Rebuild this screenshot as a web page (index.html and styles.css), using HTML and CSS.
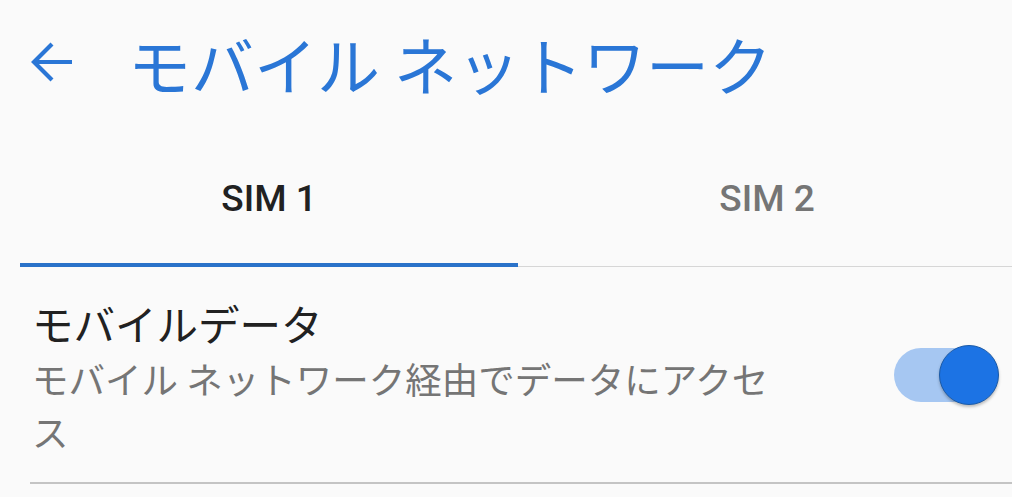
FILE: index.html
```html
<!DOCTYPE html>
<html lang="ja">
  <head>
    <meta charset="UTF-8" />
    <title>モバイル ネットワーク</title>
    <link rel="stylesheet" href="styles.css">
  </head>

  <body>
    <!-- ツールバー -->
    <div class="toolbar">
      <svg class="back" width="44" height="44" viewBox="0 0 44 44">
        <path d="M43 21H5M23 3L5 21L23 39" fill="none" stroke="#2a76d6" stroke-width="4.2" stroke-linecap="butt" stroke-linejoin="miter" />
      </svg>
      <h1 class="title">モバイル ネットワーク</h1>
    </div>

    <!-- SIM タブ -->
    <div class="tabs">
      <div class="tab active">SIM 1</div>
      <div class="tab">SIM 2</div>
    </div>

    <!-- 設定項目 -->
    <div class="item">
      <div class="item-text">
        <div class="item-title">モバイルデータ</div>
        <div class="item-summary">モバイル ネットワーク経由でデータにアクセス</div>
      </div>
      <div class="switch">
        <div class="track"></div>
        <div class="thumb"></div>
      </div>
    </div>
  </body>
</html>
```

FILE: styles.css
```css
body {
  margin: 0;
  background-color: #fafafa;
  font-family: "Noto Sans CJK JP", "Noto Sans", sans-serif;
  overflow: hidden;
}

.toolbar {
  height: 124px;
  display: flex;
  align-items: center;
}

.back {
  margin-left: 29px;
  margin-top: 1px;
}

.title {
  margin: 0 0 0 55px;
  font-size: 63px;
  font-weight: normal;
  line-height: 1;
  color: #2a76d6;
}

.tabs {
  display: flex;
  margin-left: 20px;
  height: 143px;
  border-bottom: 1px solid #d6d6d6;
  box-sizing: border-box;
}

.tab {
  width: 498px;
  flex-shrink: 0;
  box-sizing: border-box;
  padding-top: 53px;
  text-align: center;
  font-family: Roboto, "Liberation Sans", sans-serif;
  font-weight: 500;
  font-size: 37px;
  line-height: 44px;
  color: #757575;
}

.tab.active {
  color: #212121;
  border-bottom: 4px solid #2a72c9;
  margin-bottom: -1px;
}

.item {
  display: flex;
  margin-left: 30px;
  padding: 32px 13px 24px 2px;
  border-bottom: 2px solid #c4c4c4;
}

.item-text {
  width: 763px;
}

.item-title {
  font-size: 41.5px;
  line-height: 48px;
  color: #212121;
}

.item-summary {
  margin-top: 5px;
  font-size: 36.5px;
  line-height: 53px;
  color: #757575;
}

/* スイッチ */
.switch {
  position: relative;
  width: 105px;
  height: 60px;
  margin-left: auto;
  margin-top: 46px;
}

.track {
  position: absolute;
  left: 0;
  top: 3px;
  width: 100px;
  height: 54px;
  border-radius: 27px;
  background-color: #a6c7f2;
}

.thumb {
  position: absolute;
  right: 0;
  top: 0;
  width: 58px;
  height: 58px;
  border-radius: 50%;
  background-color: #1c73e4;
  border: 1px solid #1a5aa8;
  box-shadow: 0 2px 3px rgba(0, 0, 0, 0.25);
}
```
